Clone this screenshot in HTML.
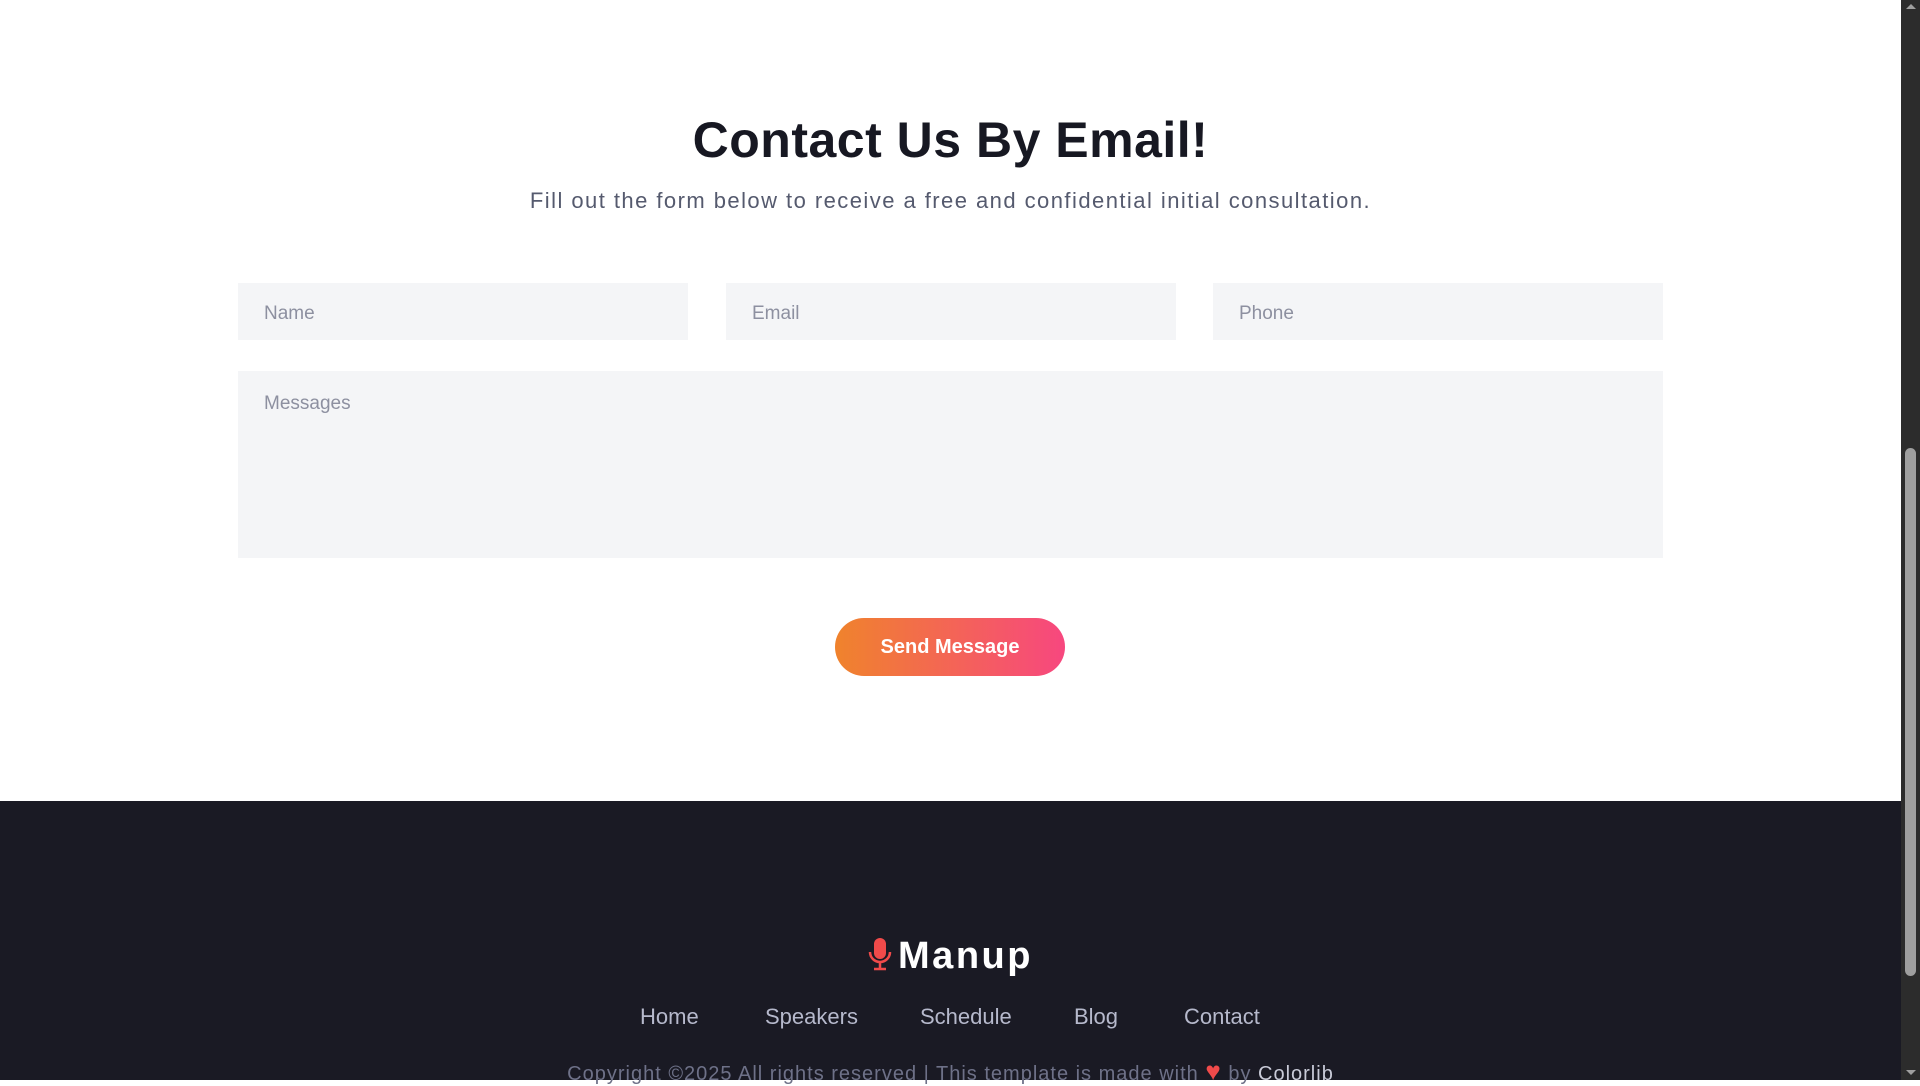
<!DOCTYPE html>
<html><head><meta charset="utf-8"><style>
*{margin:0;padding:0;box-sizing:border-box}
html,body{width:1920px;height:1080px;overflow:hidden;background:#fff;font-family:"Liberation Sans",sans-serif}
.page{position:absolute;left:0;top:0;width:1901px;height:1080px}
h1{position:absolute;top:111px;width:100%;text-align:center;font-size:50px;font-weight:bold;color:#171822;letter-spacing:0.5px}
.sub{position:absolute;top:188px;width:100%;text-align:center;font-size:22px;color:#555a6e;letter-spacing:1.45px}
.in{position:absolute;background:#f4f5f7;color:#8d90a0;font-size:19px;padding-left:26px}
.btn{position:absolute;left:835px;top:618px;width:230px;height:58px;border-radius:29px;background:linear-gradient(90deg,#f0832c,#f7477f);color:#fff;font-weight:bold;font-size:20px;text-align:center;line-height:58px}
footer{position:absolute;left:0;top:801px;width:1901px;height:279px;background:#1a1a24}
.logo{position:absolute;top:134px;width:100%;text-align:center;color:#fff;font-weight:bold;font-size:38px;letter-spacing:2.5px}
.nav a{position:absolute;top:203px;color:#b6b9cc;font-size:22px;text-decoration:none}
.copy{position:absolute;top:260px;width:100%;text-align:center;color:#6e7188;font-size:20px;letter-spacing:1px}
.sb{position:absolute;left:1901px;top:0;width:19px;height:1080px;background:#2c2c2c}
.th{position:absolute;left:4px;top:448px;width:11px;height:528px;background:#9f9f9f;border-radius:6px}
.ar{position:absolute;left:5px;width:0;height:0;border-left:5px solid transparent;border-right:5px solid transparent}
</style></head><body>
<div class="page">
<h1>Contact Us By Email!</h1>
<div class="sub">Fill out the form below to receive a free and confidential initial consultation.</div>
<div class="in" style="left:238px;top:283px;width:450px;height:57px;line-height:61px">Name</div>
<div class="in" style="left:726px;top:283px;width:450px;height:57px;line-height:61px">Email</div>
<div class="in" style="left:1213px;top:283px;width:450px;height:57px;line-height:61px">Phone</div>
<div class="in" style="left:238px;top:371px;width:1425px;height:187px;padding-top:22px">Messages</div>
<div class="btn">Send Message</div>
<footer>
<div class="logo"><svg width="24" height="34" viewBox="0 0 24 34" style="vertical-align:-3px;margin-right:6px"><rect x="6" y="1" width="12" height="21" rx="6" fill="#f04a4a"/><path d="M2 15a10 10 0 0 0 20 0M12 25v6M6 32h12" stroke="#f04a4a" stroke-width="2.5" fill="none"/></svg>Manup</div>
<div class="nav"><a style="left:640px">Home</a><a style="left:765px">Speakers</a><a style="left:920px">Schedule</a><a style="left:1074px">Blog</a><a style="left:1184px">Contact</a></div>
<div class="copy">Copyright ©2025 All rights reserved | This template is made with <span style="color:#f04a4a;font-size:26px;line-height:20px">♥</span> by <span style="color:#c9cbd8">Colorlib</span></div>
</footer>
</div>
<div class="sb"><div class="ar" style="top:4px;border-bottom:5px solid #9f9f9f"></div><div class="th"></div><div class="ar" style="top:1070px;border-top:5px solid #9f9f9f"></div></div>
</body></html>
